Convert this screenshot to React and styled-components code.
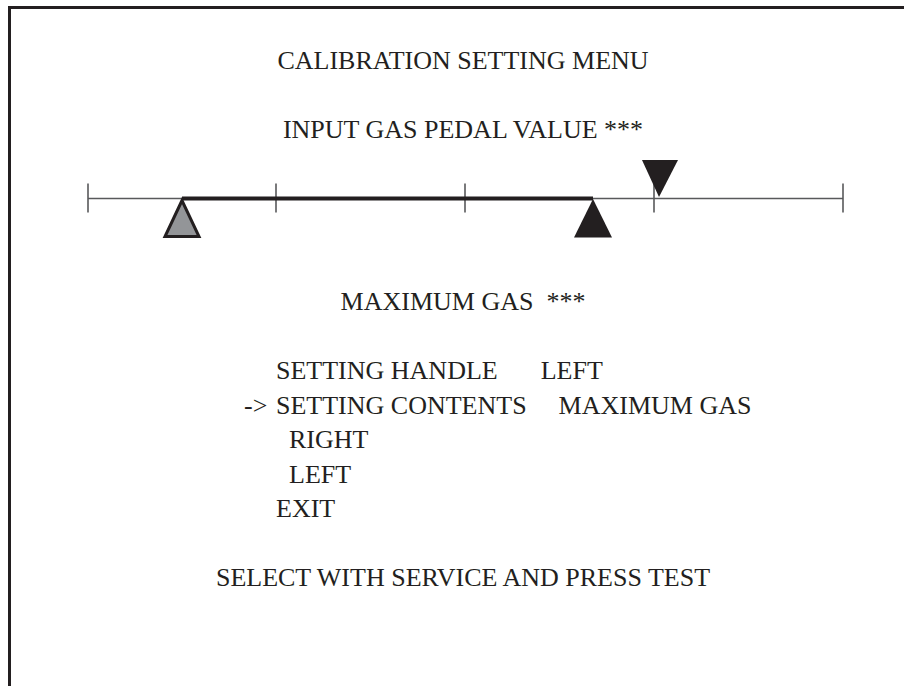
import React from "react";
import styled, { createGlobalStyle } from "styled-components";

const LINE = 34.5;

const GlobalStyle = createGlobalStyle`
  html, body {
    margin: 0;
    padding: 0;
    background: #ffffff;
    overflow: hidden;
  }
`;

const Frame = styled.div`
  margin: 6px 0 0 8px;
  width: 904px;
  min-height: 720px;
  border-top: 3px solid #231f20;
  border-left: 3px solid #231f20;
  padding-top: ${LINE}px;
  display: flex;
  flex-direction: column;
  font-family: "Liberation Serif", "Times New Roman", serif;
  font-size: 26px;
  line-height: ${LINE}px;
  color: #231f20;
  white-space: pre;
`;

const Line = styled.div`
  text-align: center;
  margin-top: ${(p) => (p.$skip || 0) * LINE}px;
`;

const Scale = styled.svg`
  display: block;
  width: 904px;
  height: ${LINE * 4}px;
`;

const Menu = styled.div`
  margin-top: ${LINE}px;
  margin-left: 233px;
  display: flex;
  flex-direction: column;
`;

const Row = styled.div`
  display: flex;
`;

const Cursor = styled.span`
  width: 32px;
  flex: none;
`;

const Label = styled.span`
  margin-left: ${(p) => p.$indent || 0}px;
`;

const Value = styled.span`
  margin-left: ${(p) => p.$gap}px;
`;

const ticks = [77, 265, 454, 643, 832];
const Y = 51.5;

function PedalScale() {
  return (
    <Scale viewBox={`0 0 904 ${LINE * 4}`}>
      <line x1="77" y1={Y} x2="832" y2={Y} stroke="#58595b" strokeWidth="1.6" />
      {ticks.map((x) => (
        <line key={x} x1={x} y1={Y - 15} x2={x} y2={Y + 14} stroke="#58595b" strokeWidth="1.6" />
      ))}
      <line x1="171" y1={Y} x2="582" y2={Y} stroke="#231f20" strokeWidth="4" />
      <polygon
        points={`171,${Y + 2} 154,${Y + 38} 188,${Y + 38}`}
        fill="#939598"
        stroke="#231f20"
        strokeWidth="3"
      />
      <polygon points={`582,${Y + 0.5} 563,${Y + 39} 601,${Y + 39}`} fill="#231f20" />
      <polygon points={`631,${Y - 38.5} 667,${Y - 38.5} 648,${Y - 1.5}`} fill="#231f20" />
    </Scale>
  );
}

export default function App() {
  return (
    <>
      <GlobalStyle />
      <Frame>
        <Line>CALIBRATION SETTING MENU</Line>
        <Line $skip={1}>INPUT GAS PEDAL VALUE ***</Line>
        <PedalScale />
        <Line>MAXIMUM GAS  ***</Line>
        <Menu>
          <Row>
            <Cursor />
            <Label>SETTING HANDLE</Label>
            <Value $gap={43}>LEFT</Value>
          </Row>
          <Row>
            <Cursor>-&gt;</Cursor>
            <Label>SETTING CONTENTS</Label>
            <Value $gap={32}>MAXIMUM GAS</Value>
          </Row>
          <Row>
            <Cursor />
            <Label $indent={13}>RIGHT</Label>
          </Row>
          <Row>
            <Cursor />
            <Label $indent={13}>LEFT</Label>
          </Row>
          <Row>
            <Cursor />
            <Label>EXIT</Label>
          </Row>
        </Menu>
        <Line $skip={1}>SELECT WITH SERVICE AND PRESS TEST</Line>
      </Frame>
    </>
  );
}
